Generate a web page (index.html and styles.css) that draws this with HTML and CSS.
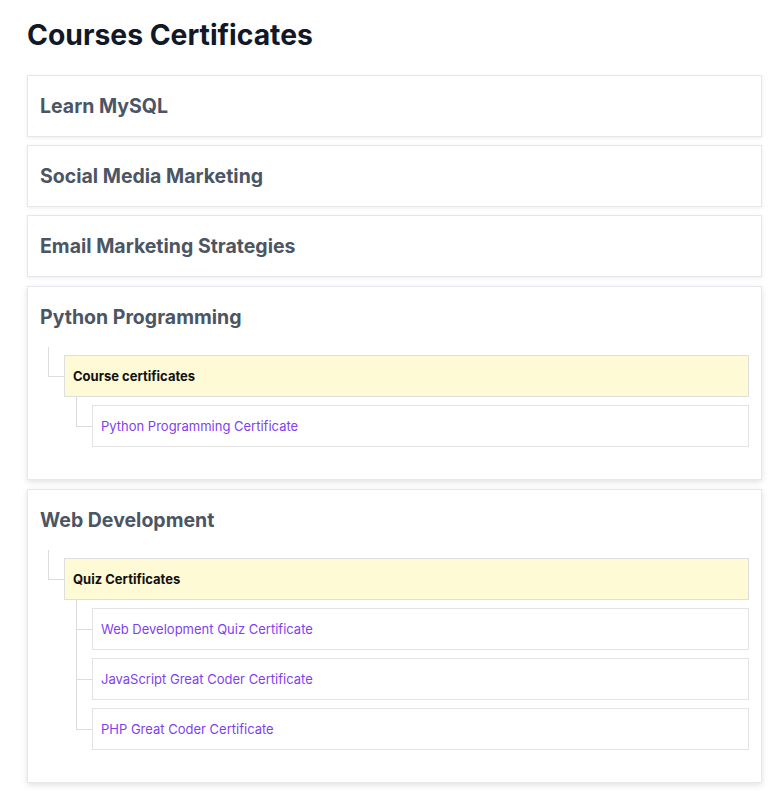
FILE: index.html
```html
<!DOCTYPE html>
<html>
  <head>
    <meta charset="utf-8" />
    <meta name="viewport" content="width=device-width, initial-scale=1" />
    <title>Courses Certificates</title>
    <link rel="stylesheet" href="styles.css">
  </head>
  <body>
    <main class="page">
      <h1 class="page-title">Courses Certificates</h1>
      <div class="course-list">
        <section class="course-card">
          <h2 class="course-name">Learn MySQL</h2>
        </section>
        <section class="course-card">
          <h2 class="course-name">Social Media Marketing</h2>
        </section>
        <section class="course-card">
          <h2 class="course-name">Email Marketing Strategies</h2>
        </section>
        <section class="course-card open">
          <h2 class="course-name">Python Programming</h2>
          <ul class="cert-tree">
            <li class="cert-group">
              <div class="group-label">Course certificates</div>
              <ul class="cert-items">
                <li class="cert-item"><a href="#">Python Programming Certificate</a></li>
              </ul>
            </li>
          </ul>
        </section>
        <section class="course-card open">
          <h2 class="course-name">Web Development</h2>
          <ul class="cert-tree">
            <li class="cert-group">
              <div class="group-label">Quiz Certificates</div>
              <ul class="cert-items">
                <li class="cert-item"><a href="#">Web Development Quiz Certificate</a></li>
                <li class="cert-item"><a href="#">JavaScript Great Coder Certificate</a></li>
                <li class="cert-item"><a href="#">PHP Great Coder Certificate</a></li>
              </ul>
            </li>
          </ul>
        </section>
      </div>
    </main>
  </body>
</html>
```

FILE: styles.css
```css
body {
  margin: 0;
  background: #fff;
  font-family: Inter, "Noto Sans", sans-serif;
}

.page {
  padding: 15px 6px 20px 27px;
}

.page-title {
  margin: 0 0 20px;
  font-size: 28.3px;
  line-height: 40px;
  font-weight: 700;
  color: #111827;
}

.course-list {
  display: flex;
  flex-direction: column;
  gap: 8px;
}

.course-card {
  background: #fff;
  border: 1px solid #e5e7eb;
  box-shadow: 0 1px 4px rgba(0, 0, 0, 0.07);
  padding: 16px 12px;
}

.course-card.open {
  margin-top: 1px;
  box-shadow: 0 2px 6px rgba(0, 0, 0, 0.12);
}

.course-name {
  margin: 0;
  font-size: 19.5px;
  line-height: 28px;
  font-weight: 700;
  color: #4b5563;
}

.cert-tree {
  list-style: none;
  margin: 16px 0 16px;
  padding: 0 0 0 24px;
}

.cert-group {
  position: relative;
  padding-top: 8px;
}

.cert-group::before {
  content: "";
  position: absolute;
  left: -16px;
  top: 0;
  width: 15px;
  height: 29px;
  border-left: 1px solid #dcdcdc;
  border-bottom: 1px solid #dcdcdc;
}

.group-label {
  background: #fefad6;
  border: 1px solid #dedede;
  padding: 12px 8px;
  font-size: 13px;
  line-height: 16px;
  font-weight: 700;
  color: #111;
}

.cert-items {
  list-style: none;
  margin: 0;
  padding: 0 0 0 28px;
}

.cert-item {
  position: relative;
  margin-top: 8px;
  border: 1px solid #e3e3e6;
  background: #fff;
  padding: 12px 8px;
  font-size: 13px;
  line-height: 16px;
}

.cert-item::before {
  content: "";
  position: absolute;
  left: -17px;
  top: -9px;
  width: 16px;
  height: calc(50% + 9px);
  border-left: 1px solid #dcdcdc;
  border-bottom: 1px solid #dcdcdc;
}

.cert-item:not(:last-child)::after {
  content: "";
  position: absolute;
  left: -17px;
  top: 50%;
  bottom: -1px;
  border-left: 1px solid #dcdcdc;
}

.cert-item a {
  color: #7f3ff0;
  text-decoration: none;
}
```
